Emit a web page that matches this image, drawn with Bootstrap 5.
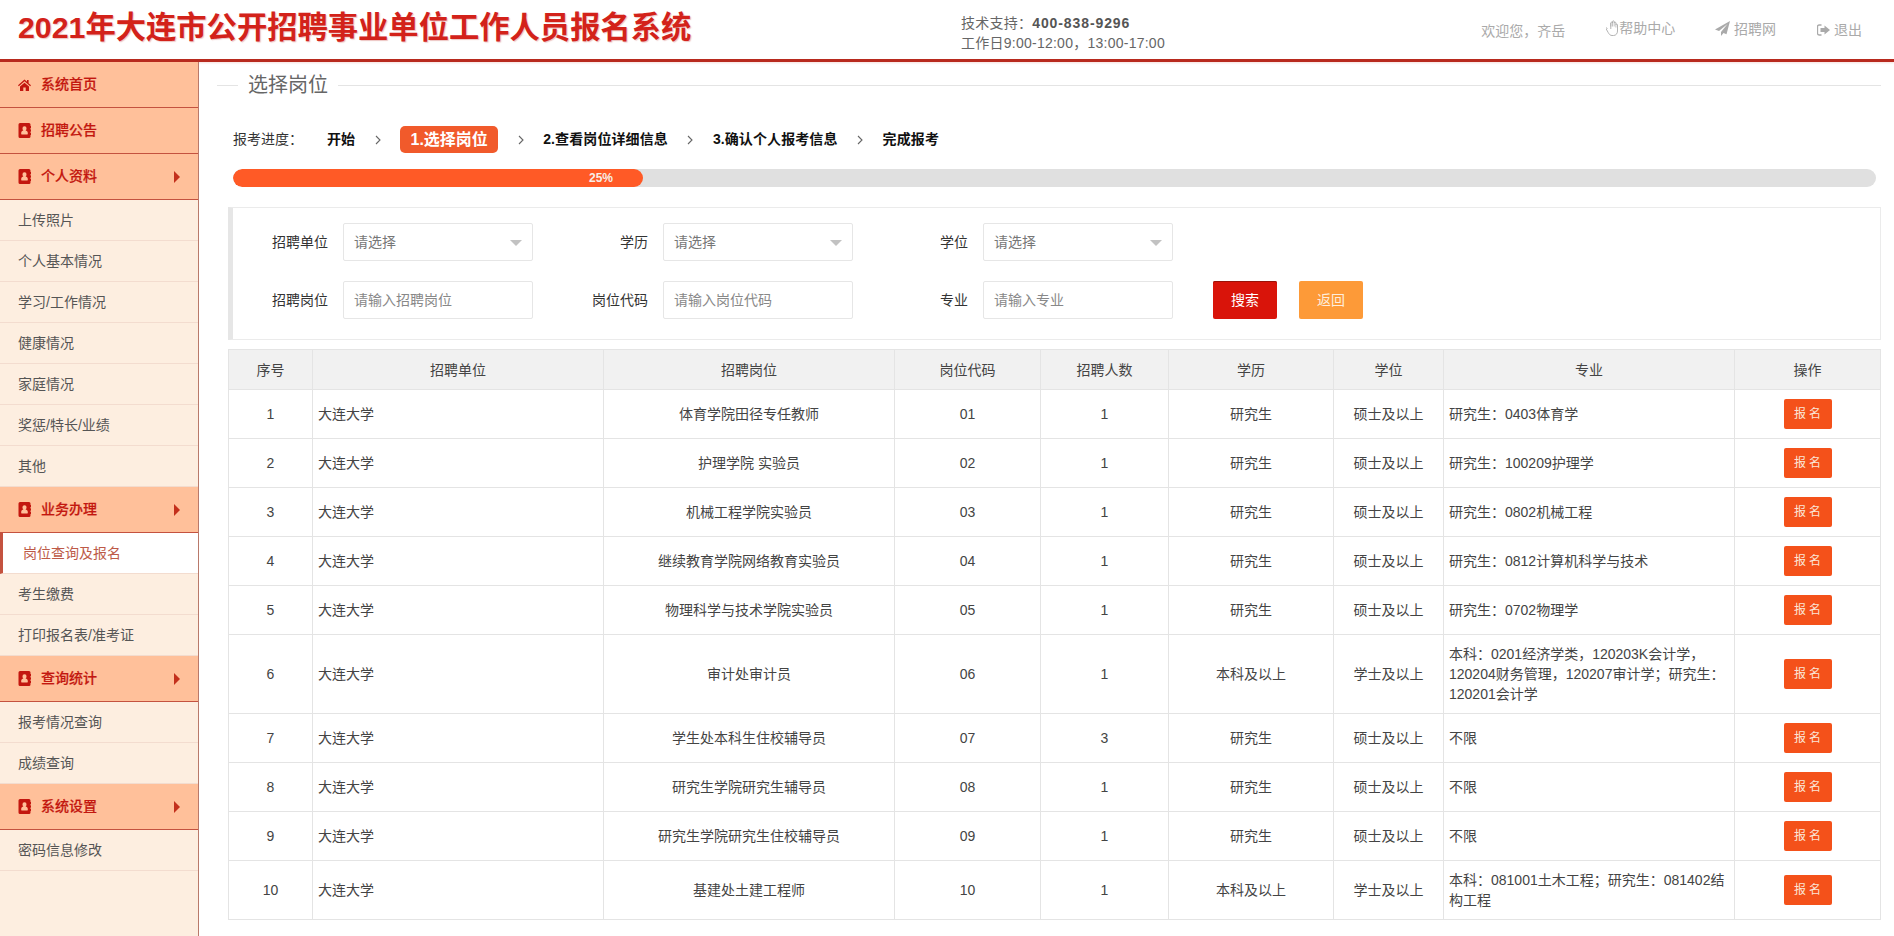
<!DOCTYPE html>
<html lang="zh-CN">
<head>
<meta charset="utf-8">
<title>2021年大连市公开招聘事业单位工作人员报名系统</title>
<link href="https://cdn.jsdelivr.net/npm/bootstrap@5.3.0/dist/css/bootstrap.min.css" rel="stylesheet">
<style>
html,body{height:100%;overflow:hidden}
body{font-family:"Liberation Sans","Noto Sans CJK SC",sans-serif;font-size:14px;color:#444;background:#fff}
.top-bar{height:62px;border-bottom:3px solid #b82a1e;padding:0 32px 0 18px;box-shadow:0 1px 2px rgba(190,40,30,.15)}
.site-title{font-size:30.3px;font-weight:700;color:#d3221a;line-height:56px;margin:0;width:943px;white-space:nowrap;text-shadow:1px 1px 1px rgba(200,90,80,.35)}
.support{font-size:14px;line-height:20px;color:#666;padding-top:13px;white-space:nowrap;letter-spacing:.25px}
.support b{font-weight:700;color:#555;letter-spacing:.9px}
.user-links{padding-top:18px;color:#aaa;font-size:14px;line-height:20px;white-space:nowrap}
.user-links span{display:inline-flex;align-items:center}
.user-links .welcome{margin-right:37px}
.user-links .help{margin-right:36px}
.user-links .site{margin-right:37px}
.user-links svg{fill:#aaa;flex:none}
.page-body{height:calc(100vh - 62px)}
.side-nav{width:199px;flex:none;background:#fdeee0;border-right:1px solid #b9796a;height:100%}
.nav-head{height:46px;background:#ffc09a;border-bottom:1px solid #c4523f;padding:0 18px;color:#c3170f;font-weight:500;-webkit-text-stroke:.2px #c3170f;font-size:14px}
.nav-head .tri{margin-left:auto;width:0;height:0;border-left:6px solid #c3301c;border-top:6px solid transparent;border-bottom:6px solid transparent;margin-right:0}
.nav-head svg{fill:#c3170f;flex:none;margin-right:10px}
.nav-sub{height:41px;display:flex;align-items:center;padding-left:18px;border-bottom:1px solid #f3dccf;color:#555;font-size:14px}
.nav-sub.current{background:#fff;color:#bd5a48;border-left:3px solid #c4523f;padding-left:20px}
.main-area{min-width:0;padding-right:13px}
.page-legend{height:46px;padding-left:18px;font-size:20px;color:#666}
.page-legend::before{content:"";width:21px;height:1px;background:#e4e4e4}
.page-legend::after{content:"";flex:1;height:1px;background:#e4e4e4}
.page-legend span{padding:0 10px;line-height:46px}
.step-row{margin:18px 0 0 34px;height:27px;color:#000;white-space:nowrap}
.step-row .intro{color:#333;width:94px}
.step-row .step{font-weight:700;color:#111;letter-spacing:.1px}
.step-row .sep{width:45px;display:flex;justify-content:center;flex:none}
.step-row .sep svg{fill:none;stroke:#666;stroke-width:1.100}
.step-row .on{background:#f15a2b;color:#fff;border-radius:5px;height:27px;width:98px;font-size:16px;line-height:27px;text-align:center;font-weight:700}
.bar-track{margin:16px 5px 0 34px;height:18px;border-radius:9px;background:#e0e0e0;overflow:hidden}
.bar-fill{height:18px;width:410px;border-radius:9px;background:#ff5a26;color:#f7eee8;font-size:12px;font-weight:700;line-height:18px;text-align:right;padding-right:30px}
.filter-box{margin:20px 0 0 29px;height:133px;border:1px solid #ebebeb;border-left:5px solid #e6e6e6;padding:15px 0 0 0}
.filter-row{height:38px;margin-bottom:20px}
.f-label{width:110px;text-align:right;padding-right:15px;color:#333;flex:none}
.f-label.mid{width:130px}
.f-control{width:190px;height:38px;border:1px solid #e6e6e6;border-radius:2px;padding:0 10px;color:#777;position:relative;display:flex;align-items:center;background:#fff;flex:none;font-size:14px}
.f-input::placeholder{color:#888}
.f-input{font-family:inherit;outline:0}
.f-control .caret-mark{position:absolute;right:10px;top:16px;width:0;height:0;border-left:6px solid transparent;border-right:6px solid transparent;border-top:6px solid #c2c2c2}
.act-btn{width:64px;height:38px;border-radius:2px;color:#fff;border:0;padding:0;font-size:14px;flex:none}
.act-red{background:#d9140a;margin-left:40px;box-shadow:inset 0 1px 0 #9a1208}
.act-orange{background:#fd9a38;margin-left:22px;color:#fdeedd}
.grid-wrap{margin:9px 0 0 29px}
.job-grid{table-layout:fixed;width:1652px;margin:0;border-color:#e4e4e4;color:#444;font-size:14px}
.job-grid>:not(caption)>*>*{padding:9px 5px;line-height:20px;color:#444}
.job-grid thead th{background:#f1f1f1;font-weight:400;text-align:center;height:40px;padding:9px 5px}
.job-grid td.mid-text{text-align:center}
.job-grid th:nth-child(1){width:84px}
.job-grid th:nth-child(2){width:291px}
.job-grid th:nth-child(3){width:291px}
.job-grid th:nth-child(4){width:146px}
.job-grid th:nth-child(5){width:128px}
.job-grid th:nth-child(6){width:165px}
.job-grid th:nth-child(7){width:110px}
.job-grid th:nth-child(8){width:291px}
.job-grid th:nth-child(9){width:146px}
.apply-btn{display:inline-block;width:48px;height:30px;background:#f4511a;color:#fbe6d8;border:0;border-radius:2px;font-size:12px;line-height:30px;padding:0;letter-spacing:3px;text-indent:3px;vertical-align:middle;text-decoration:none}
</style>
</head>
<body>
<header class="top-bar d-flex">
  <h1 class="site-title">2021年大连市公开招聘事业单位工作人员报名系统</h1>
  <div class="support">
    <div>技术支持：<b>400-838-9296</b></div>
    <div>工作日9:00-12:00，13:00-17:00</div>
  </div>
  <div class="user-links ms-auto">
    <span class="welcome">欢迎您，齐岳</span>
    <span class="help"><svg width="13" height="16" viewBox="0 0 13 16"><path d="M1.500 8.500 1 8c-.8-.6-1.300.3-.8 1l2 3.500C3.200 14.300 4.200 15.500 6 15.500h1.500c2.500 0 4-2 4-4.500V5c0-1.200-1.600-1.200-1.600 0V3c0-1.200-1.700-1.200-1.700 0V1.700c0-1.200-1.700-1.200-1.700 0V3c0-1.200-1.700-1.200-1.700 0v6" fill="none" stroke="#aaa" stroke-width=".9"/><path d="M4.800 3v3.500M6.500 2v4.500M8.200 3v3.500M9.900 5v2.500" fill="none" stroke="#aaa" stroke-width=".7"/></svg>帮助中心</span>
    <span class="site"><svg width="15" height="15" viewBox="0 0 15 15"><path d="M15 0 0 8.500l4 1.500L12.500 3 6 11v4l2.500-3 3 1.300z"/></svg><span class="ms-1">招聘网</span></span>
    <span class="quit"><svg width="13" height="12" viewBox="0 0 13 12" class="me-1"><path d="M4.500 1H2.200C1 1 .5 1.800.5 2.800v6.400c0 1 .5 1.800 1.700 1.800h2.300" fill="none" stroke="#aaa" stroke-width="1.300"/><path d="M7.500 1.500 13 6l-5.500 4.500V8H3.500V4h4z"/></svg>退出</span>
  </div>
</header>
<div class="page-body d-flex">
  <nav class="side-nav">
    <div class="nav-head d-flex align-items-center"><svg width="13" height="12" viewBox="0 0 13 12"><path d="M6.500.5 0 6.300l.8.9L6.500 2.300l5.700 4.900.8-.9L10.600 4.200V1H9v1.800zM2 7.600V12h3.300V8.500h2.400V12H11V7.600L6.500 3.700z"/></svg>系统首页</div>
    <div class="nav-head d-flex align-items-center"><svg width="13" height="15" viewBox="0 0 13 15"><path fill-rule="evenodd" d="M2 0h9a1.500 1.500 0 0 1 1.500 1.500V3H13v2h-.5v1.500H13v2h-.5V10H13v2h-.5v1.500A1.500 1.500 0 0 1 11 15H2a1.500 1.500 0 0 1-1.500-1.500v-12A1.500 1.500 0 0 1 2 0zm4.500 3.200a2 2 0 0 0-2 2.200c0 1 .5 1.800 1 2.200-1.300.3-2.300 1-2.300 2.300v1.100c0 .3.200.5.500.5h5.600c.3 0 .5-.2.500-.5V9.900c0-1.300-1-2-2.300-2.300.5-.4 1-1.200 1-2.200a2 2 0 0 0-2-2.200z"/></svg>招聘公告</div>
    <div class="nav-head d-flex align-items-center"><svg width="13" height="15" viewBox="0 0 13 15"><path fill-rule="evenodd" d="M2 0h9a1.500 1.500 0 0 1 1.500 1.500V3H13v2h-.5v1.500H13v2h-.5V10H13v2h-.5v1.500A1.500 1.500 0 0 1 11 15H2a1.500 1.500 0 0 1-1.500-1.500v-12A1.500 1.500 0 0 1 2 0zm4.500 3.200a2 2 0 0 0-2 2.200c0 1 .5 1.800 1 2.200-1.300.3-2.300 1-2.300 2.300v1.100c0 .3.200.5.500.5h5.600c.3 0 .5-.2.500-.5V9.900c0-1.300-1-2-2.300-2.300.5-.4 1-1.200 1-2.200a2 2 0 0 0-2-2.200z"/></svg>个人资料<i class="tri"></i></div>
    <div class="nav-sub">上传照片</div>
    <div class="nav-sub">个人基本情况</div>
    <div class="nav-sub">学习/工作情况</div>
    <div class="nav-sub">健康情况</div>
    <div class="nav-sub">家庭情况</div>
    <div class="nav-sub">奖惩/特长/业绩</div>
    <div class="nav-sub">其他</div>
    <div class="nav-head d-flex align-items-center"><svg width="13" height="15" viewBox="0 0 13 15"><path fill-rule="evenodd" d="M2 0h9a1.500 1.500 0 0 1 1.500 1.500V3H13v2h-.5v1.500H13v2h-.5V10H13v2h-.5v1.500A1.500 1.500 0 0 1 11 15H2a1.500 1.500 0 0 1-1.500-1.500v-12A1.500 1.500 0 0 1 2 0zm4.500 3.200a2 2 0 0 0-2 2.200c0 1 .5 1.800 1 2.200-1.300.3-2.300 1-2.300 2.300v1.100c0 .3.200.5.500.5h5.600c.3 0 .5-.2.500-.5V9.900c0-1.300-1-2-2.300-2.300.5-.4 1-1.200 1-2.200a2 2 0 0 0-2-2.200z"/></svg>业务办理<i class="tri"></i></div>
    <div class="nav-sub current">岗位查询及报名</div>
    <div class="nav-sub">考生缴费</div>
    <div class="nav-sub">打印报名表/准考证</div>
    <div class="nav-head d-flex align-items-center"><svg width="13" height="15" viewBox="0 0 13 15"><path fill-rule="evenodd" d="M2 0h9a1.500 1.500 0 0 1 1.500 1.500V3H13v2h-.5v1.500H13v2h-.5V10H13v2h-.5v1.500A1.500 1.500 0 0 1 11 15H2a1.500 1.500 0 0 1-1.500-1.500v-12A1.500 1.500 0 0 1 2 0zm4.500 3.200a2 2 0 0 0-2 2.200c0 1 .5 1.800 1 2.200-1.300.3-2.300 1-2.300 2.300v1.100c0 .3.200.5.500.5h5.600c.3 0 .5-.2.500-.5V9.900c0-1.300-1-2-2.300-2.300.5-.4 1-1.200 1-2.200a2 2 0 0 0-2-2.200z"/></svg>查询统计<i class="tri"></i></div>
    <div class="nav-sub">报考情况查询</div>
    <div class="nav-sub">成绩查询</div>
    <div class="nav-head d-flex align-items-center"><svg width="13" height="15" viewBox="0 0 13 15"><path fill-rule="evenodd" d="M2 0h9a1.500 1.500 0 0 1 1.500 1.500V3H13v2h-.5v1.500H13v2h-.5V10H13v2h-.5v1.500A1.500 1.500 0 0 1 11 15H2a1.500 1.500 0 0 1-1.500-1.500v-12A1.500 1.500 0 0 1 2 0zm4.500 3.200a2 2 0 0 0-2 2.200c0 1 .5 1.800 1 2.200-1.300.3-2.300 1-2.300 2.300v1.100c0 .3.200.5.500.5h5.600c.3 0 .5-.2.500-.5V9.900c0-1.300-1-2-2.300-2.300.5-.4 1-1.200 1-2.200a2 2 0 0 0-2-2.200z"/></svg>系统设置<i class="tri"></i></div>
    <div class="nav-sub">密码信息修改</div>
  </nav>
  <main class="main-area flex-grow-1">
    <div class="page-legend d-flex align-items-center"><span>选择岗位</span></div>
    <div class="step-row d-flex align-items-center">
      <span class="intro">报考进度：</span>
      <span class="step">开始</span>
      <span class="sep"><svg width="6" height="10" viewBox="0 0 6 10"><path d="M1 1l4 4-4 4"/></svg></span>
      <span class="on">1.选择岗位</span>
      <span class="sep"><svg width="6" height="10" viewBox="0 0 6 10"><path d="M1 1l4 4-4 4"/></svg></span>
      <span class="step">2.查看岗位详细信息</span>
      <span class="sep"><svg width="6" height="10" viewBox="0 0 6 10"><path d="M1 1l4 4-4 4"/></svg></span>
      <span class="step">3.确认个人报考信息</span>
      <span class="sep"><svg width="6" height="10" viewBox="0 0 6 10"><path d="M1 1l4 4-4 4"/></svg></span>
      <span class="step">完成报考</span>
    </div>
    <div class="bar-track"><div class="bar-fill">25%</div></div>
    <form class="filter-box">
      <div class="filter-row d-flex align-items-center">
        <span class="f-label">招聘单位</span>
        <div class="f-control">请选择<i class="caret-mark"></i></div>
        <span class="f-label mid">学历</span>
        <div class="f-control">请选择<i class="caret-mark"></i></div>
        <span class="f-label mid">学位</span>
        <div class="f-control">请选择<i class="caret-mark"></i></div>
      </div>
      <div class="filter-row d-flex align-items-center">
        <span class="f-label">招聘岗位</span>
        <input class="f-control f-input" placeholder="请输入招聘岗位">
        <span class="f-label mid">岗位代码</span>
        <input class="f-control f-input" placeholder="请输入岗位代码">
        <span class="f-label mid">专业</span>
        <input class="f-control f-input" placeholder="请输入专业">
        <button type="button" class="act-btn act-red">搜索</button>
        <button type="button" class="act-btn act-orange">返回</button>
      </div>
    </form>
    <div class="grid-wrap">
      <table class="table table-bordered align-middle job-grid">
        <thead><tr><th>序号</th><th>招聘单位</th><th>招聘岗位</th><th>岗位代码</th><th>招聘人数</th><th>学历</th><th>学位</th><th>专业</th><th>操作</th></tr></thead>
        <tbody>
          <tr><td class="mid-text">1</td><td>大连大学</td><td class="mid-text">体育学院田径专任教师</td><td class="mid-text">01</td><td class="mid-text">1</td><td class="mid-text">研究生</td><td class="mid-text">硕士及以上</td><td>研究生：0403体育学</td><td class="mid-text"><a class="apply-btn">报名</a></td></tr>
          <tr><td class="mid-text">2</td><td>大连大学</td><td class="mid-text">护理学院 实验员</td><td class="mid-text">02</td><td class="mid-text">1</td><td class="mid-text">研究生</td><td class="mid-text">硕士及以上</td><td>研究生：100209护理学</td><td class="mid-text"><a class="apply-btn">报名</a></td></tr>
          <tr><td class="mid-text">3</td><td>大连大学</td><td class="mid-text">机械工程学院实验员</td><td class="mid-text">03</td><td class="mid-text">1</td><td class="mid-text">研究生</td><td class="mid-text">硕士及以上</td><td>研究生：0802机械工程</td><td class="mid-text"><a class="apply-btn">报名</a></td></tr>
          <tr><td class="mid-text">4</td><td>大连大学</td><td class="mid-text">继续教育学院网络教育实验员</td><td class="mid-text">04</td><td class="mid-text">1</td><td class="mid-text">研究生</td><td class="mid-text">硕士及以上</td><td>研究生：0812计算机科学与技术</td><td class="mid-text"><a class="apply-btn">报名</a></td></tr>
          <tr><td class="mid-text">5</td><td>大连大学</td><td class="mid-text">物理科学与技术学院实验员</td><td class="mid-text">05</td><td class="mid-text">1</td><td class="mid-text">研究生</td><td class="mid-text">硕士及以上</td><td>研究生：0702物理学</td><td class="mid-text"><a class="apply-btn">报名</a></td></tr>
          <tr><td class="mid-text">6</td><td>大连大学</td><td class="mid-text">审计处审计员</td><td class="mid-text">06</td><td class="mid-text">1</td><td class="mid-text">本科及以上</td><td class="mid-text">学士及以上</td><td>本科：0201经济学类，120203K会计学，120204财务管理，120207审计学；研究生：120201会计学</td><td class="mid-text"><a class="apply-btn">报名</a></td></tr>
          <tr><td class="mid-text">7</td><td>大连大学</td><td class="mid-text">学生处本科生住校辅导员</td><td class="mid-text">07</td><td class="mid-text">3</td><td class="mid-text">研究生</td><td class="mid-text">硕士及以上</td><td>不限</td><td class="mid-text"><a class="apply-btn">报名</a></td></tr>
          <tr><td class="mid-text">8</td><td>大连大学</td><td class="mid-text">研究生学院研究生辅导员</td><td class="mid-text">08</td><td class="mid-text">1</td><td class="mid-text">研究生</td><td class="mid-text">硕士及以上</td><td>不限</td><td class="mid-text"><a class="apply-btn">报名</a></td></tr>
          <tr><td class="mid-text">9</td><td>大连大学</td><td class="mid-text">研究生学院研究生住校辅导员</td><td class="mid-text">09</td><td class="mid-text">1</td><td class="mid-text">研究生</td><td class="mid-text">硕士及以上</td><td>不限</td><td class="mid-text"><a class="apply-btn">报名</a></td></tr>
          <tr><td class="mid-text">10</td><td>大连大学</td><td class="mid-text">基建处土建工程师</td><td class="mid-text">10</td><td class="mid-text">1</td><td class="mid-text">本科及以上</td><td class="mid-text">学士及以上</td><td>本科：081001土木工程；研究生：081402结构工程</td><td class="mid-text"><a class="apply-btn">报名</a></td></tr>
        </tbody>
      </table>
    </div>
  </main>
</div>
<script src="https://cdn.jsdelivr.net/npm/bootstrap@5.3.0/dist/js/bootstrap.bundle.min.js"></script>
</body>
</html>
